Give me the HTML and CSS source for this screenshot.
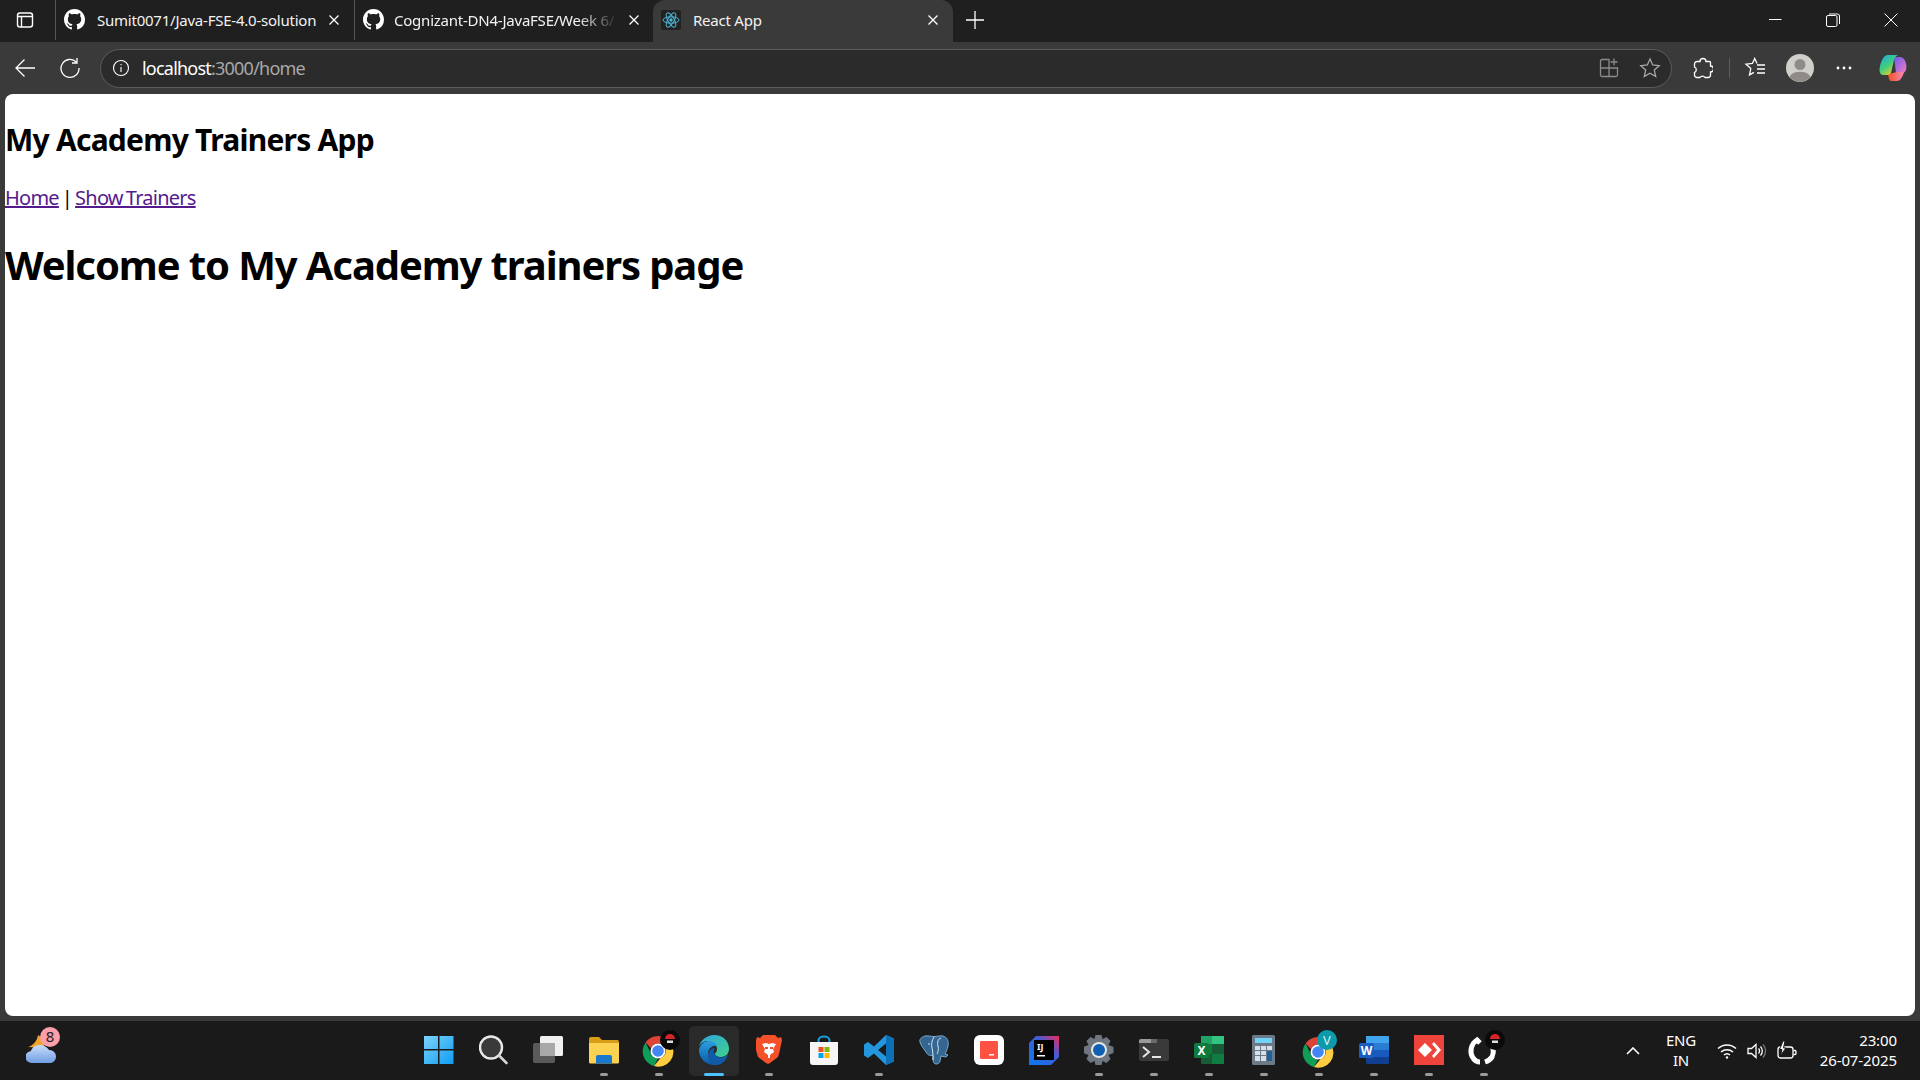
FILE: index.html
```html
<!DOCTYPE html>
<html lang="en">
<head>
  <meta charset="UTF-8">
  <title>React App</title>
  <link rel="stylesheet" href="styles.css">
</head>
<body>
  <svg class="defs" width="0" height="0">
    <symbol id="octocat" viewBox="0 0 16 16">
      <path fill="#fff" d="M8 0C3.58 0 0 3.58 0 8c0 3.54 2.29 6.53 5.47 7.59.4.07.55-.17.55-.38 0-.19-.01-.82-.01-1.49-2.01.37-2.53-.49-2.69-.94-.09-.23-.48-.94-.82-1.13-.28-.15-.68-.52-.01-.53.63-.01 1.08.58 1.23.82.72 1.21 1.87.87 2.33.66.07-.52.28-.87.51-1.07-1.78-.2-3.64-.89-3.64-3.95 0-.87.31-1.59.82-2.15-.08-.2-.36-1.02.08-2.12 0 0 .67-.21 2.2.82.64-.18 1.32-.27 2-.27.68 0 1.36.09 2 .27 1.53-1.04 2.2-.82 2.2-.82.44 1.1.16 1.92.08 2.12.51.56.82 1.27.82 2.15 0 3.07-1.87 3.75-3.65 3.95.29.25.54.73.54 1.48 0 1.07-.01 1.93-.01 2.2 0 .21.15.46.55.38A8.013 8.013 0 0016 8c0-4.42-3.58-8-8-8z"/>
    </symbol>
    <symbol id="close" viewBox="0 0 12 12">
      <path d="M1.5 1.5l9 9M10.5 1.5l-9 9" stroke="#fff" stroke-width="1.3" fill="none"/>
    </symbol>
    <symbol id="chrome" viewBox="0 0 32 32">
      <path fill="#db4437" d="M16 1a15 15 0 0 1 13 7.5H16a7.5 7.5 0 0 0-7 4.8L3.6 7.6A15 15 0 0 1 16 1z"/>
      <path fill="#0f9d58" d="M3.600 7.600L9.500 19.800a7.500 7.500 0 0 0 6.500 3.700L12 31A15 15 0 0 1 3.600 7.600z"/>
      <path fill="#ffcd40" d="M29 8.500a15 15 0 0 1-17 22.500l6.500-8a7.500 7.500 0 0 0 4-11.500z"/>
      <circle cx="16" cy="16" r="7.500" fill="#fff"/>
      <circle cx="16" cy="16" r="5.800" fill="#4285f4"/>
    </symbol>
    <symbol id="pokeball" viewBox="0 0 20 20">
      <circle cx="10" cy="10" r="10" fill="#0a0a0a"/>
      <path fill="#d8232a" d="M5 9a5 5 0 0 1 10 0z"/>
      <path fill="#ddd" d="M7 10.500h6v2.500H7z"/>
    </symbol>
  </svg>

  <div class="tabstrip">
    <button class="tab-side">
      <svg width="20" height="20" viewBox="0 0 20 20" fill="none" stroke="#fff" stroke-width="1.4"><rect x="2.500" y="3" width="15" height="14" rx="2.500"/><path d="M2.500 6.500h15M6.500 6.500V17"/></svg>
    </button>
    <div class="tab">
      <svg class="favicon" width="21" height="21"><use href="#octocat"/></svg>
      <span class="tab-title">Sumit0071/Java-FSE-4.0-solution</span>
      <svg class="tab-close" width="12" height="12"><use href="#close"/></svg>
    </div>
    <div class="tab tab-second">
      <svg class="favicon" width="21" height="21"><use href="#octocat"/></svg>
      <span class="tab-title tab-fade">Cognizant-DN4-JavaFSE/Week 6/</span>
      <svg class="tab-close" width="12" height="12"><use href="#close"/></svg>
    </div>
    <div class="tab tab-active">
      <svg class="favicon" width="20" height="20" viewBox="0 0 20 20" fill="none" stroke="#4fb8d8" stroke-width="1">
        <rect width="20" height="20" rx="2" fill="#222" stroke="none"/>
        <ellipse cx="10" cy="10" rx="8" ry="3.200"/>
        <ellipse cx="10" cy="10" rx="8" ry="3.200" transform="rotate(60 10 10)"/>
        <ellipse cx="10" cy="10" rx="8" ry="3.200" transform="rotate(120 10 10)"/>
        <circle cx="10" cy="10" r="1.700" fill="#4fb8d8" stroke="none"/>
      </svg>
      <span class="tab-title">React App</span>
      <svg class="tab-close" width="12" height="12"><use href="#close"/></svg>
    </div>
    <button class="new-tab">
      <svg width="18" height="18" viewBox="0 0 18 18" stroke="#fff" stroke-width="1.300"><path d="M9 0v18M0 9h18"/></svg>
    </button>
    <div class="window-btns">
      <svg width="14" height="14" viewBox="0 0 14 14" stroke="#fff" stroke-width="1"><path d="M1 6.500h12.500"/></svg>
      <svg width="14" height="14" viewBox="0 0 14 14" fill="none" stroke="#fff" stroke-width="1"><rect x=".5" y="2.500" width="10.500" height="11" rx="1.500"/><path d="M3 1h8.500a2 2 0 0 1 2 2v8"/></svg>
      <svg width="14" height="14" viewBox="0 0 14 14" stroke="#fff" stroke-width="1"><path d="M.5.5l13 13M13.500.5l-13 13"/></svg>
    </div>
  </div>

  <div class="toolbar">
    <button class="tool-btn">
      <svg width="22" height="22" viewBox="0 0 22 22" fill="none" stroke="#fff" stroke-width="1.300"><path d="M21 11H2M10.500 2.500L2 11l8.500 8.500"/></svg>
    </button>
    <button class="tool-btn">
      <svg width="22" height="22" viewBox="0 0 22 22" fill="none" stroke="#fff" stroke-width="1.300"><path d="M17.500 5.200A9 9 0 1 0 20 11"/><path d="M18 1v5h-5"/></svg>
    </button>
    <div class="address">
      <svg class="addr-info" width="18" height="18" viewBox="0 0 18 18" fill="none" stroke="#fff" stroke-width="1.100"><circle cx="9" cy="9" r="7.500"/><path d="M9 8v5M9 5v1.300"/></svg>
      <span class="url">localhost<span class="url-rest">:3000/home</span></span>
      <svg class="addr-icon" width="20" height="20" viewBox="0 0 20 20" fill="none" stroke="#8c8c8c" stroke-width="1.300"><path d="M10 10V1.500H3a1.500 1.500 0 0 0-1.500 1.500v14A1.500 1.500 0 0 0 3 18.500h14a1.500 1.500 0 0 0 1.500-1.500v-7zM1.500 10H10v8.500"/><path d="M15 .5v7M11.500 4h7"/></svg>
      <svg class="addr-icon" width="22" height="22" viewBox="0 0 22 22" fill="none" stroke="#a8a8a8" stroke-width="1.300"><path d="M11 2l2.700 6 6.500.7-4.900 4.400 1.400 6.400-5.700-3.300-5.700 3.300 1.400-6.400L1.800 8.700 8.300 8z"/></svg>
    </div>
    <div class="tool-right">
      <svg class="ext" width="20" height="22" viewBox="0 0 20 22" fill="none" stroke="#fff" stroke-width="1.300"><path d="M7 4.500a3 3 0 0 1 6 0h3.500a1 1 0 0 1 1 1V9a3 3 0 0 1 0 6v3a2.500 2.500 0 0 1-2.500 2.500h-3a3 3 0 0 0-5 0H4A2.500 2.500 0 0 1 1.500 18v-2.500a3 3 0 0 0 0-5.500V7A2.500 2.500 0 0 1 4 4.500z"/></svg>
      <span class="tool-sep"></span>
      <svg class="favs" width="22" height="22" viewBox="0 0 22 22" fill="none" stroke="#fff" stroke-width="1.300"><path d="M13 6.500l-2.300-5-2.300 5-6.400.7 4.800 4.400-1.300 6.300 4.400-2.500M13 8h8M13 12h8M13 16h8"/></svg>
      <svg class="avatar" width="28" height="28" viewBox="0 0 28 28"><circle cx="14" cy="14" r="14" fill="#d1cfca"/><circle cx="14" cy="10.500" r="5.500" fill="#8f8c87"/><path fill="#8f8c87" d="M3.500 23a11 7.500 0 0 1 21 0A14 14 0 0 1 3.500 23z"/></svg>
      <svg class="more" width="16" height="4" viewBox="0 0 16 4" fill="#fff"><circle cx="2" cy="2" r="1.400"/><circle cx="8" cy="2" r="1.400"/><circle cx="14" cy="2" r="1.400"/></svg>
      <svg class="copilot" width="28" height="26" viewBox="0 0 28 26">
        <defs>
          <linearGradient id="cpA" x1="0" y1="0" x2=".7" y2="1"><stop offset="0" stop-color="#1fa6f0"/><stop offset=".55" stop-color="#3fcf7a"/><stop offset="1" stop-color="#f6c92c"/></linearGradient>
          <linearGradient id="cpB" x1="0" y1="0" x2="1" y2="1"><stop offset="0" stop-color="#6a5cf0"/><stop offset="1" stop-color="#f57ac0"/></linearGradient>
          <linearGradient id="cpC" x1="0" y1="0" x2="1" y2="0"><stop offset="0" stop-color="#f2501e"/><stop offset="1" stop-color="#f78ab8"/></linearGradient>
        </defs>
        <path fill="url(#cpB)" d="M15 2h6c3 0 5.500 3 6.300 8 .5 4-.8 8-3.800 8H17z"/>
        <path fill="url(#cpC)" d="M9 19l9-2h7c-1 4-3.500 9-7 9h-6c-1.500 0-2.500-3-3-7z"/>
        <path fill="url(#cpA)" d="M9 0h10c-2.500 1-3.500 3-4 5l-2.500 11c-.5 2.500-2 4-4 4H4C1.500 20 0 17 .7 13 1.500 8 4 0 9 0z"/>
      </svg>
    </div>
  </div>

  <main class="viewport">
    <h2>My Academy Trainers App</h2>
    <nav class="links"><a href="#home">Home</a> | <a href="#trainers">Show Trainers</a></nav>
    <h1>Welcome to My Academy trainers page</h1>
  </main>

  <div class="taskbar">
    <div class="tb-left">
      <svg width="36" height="38" viewBox="0 0 36 38">
        <defs><linearGradient id="cloud" x1="0" y1="0" x2="0" y2="1"><stop offset="0" stop-color="#c9defa"/><stop offset="1" stop-color="#6f9fe4"/></linearGradient></defs>
        <path fill="#f2a32c" d="M2 21C6 20 11 16 12 9c4 2 7 7 6 13z"/>
        <path fill="url(#cloud)" d="M6 37a6 6 0 0 1-1-12c1-4 5-6 9-6 4 0 7 2 9 5a6.500 6.500 0 0 1 7 6.500c0 4-3 6.500-6 6.500z"/>
        <circle cx="24" cy="11" r="10" fill="#fb9fab"/>
        <text x="24" y="16" class="badge-num" text-anchor="middle">8</text>
      </svg>
    </div>
    <div class="tb-apps">
      <div class="app">
        <svg width="30" height="30" viewBox="0 0 30 30">
          <defs><linearGradient id="win" x1="0" y1="0" x2="1" y2="1"><stop offset="0" stop-color="#7cd4fb"/><stop offset="1" stop-color="#0f9bf2"/></linearGradient></defs>
          <path fill="url(#win)" d="M0 1h14v13H0zM15.500 1h14v13h-14zM0 15.500h14V29H0zM15.500 15.500h14V29h-14z"/>
        </svg>
      </div>
      <div class="app">
        <svg width="30" height="30" viewBox="0 0 30 30" fill="none"><circle cx="12" cy="12.500" r="11" fill="#3a3a3a" stroke="#e8e8e8" stroke-width="2.400"/><path d="M20.500 21l7 7" stroke="#d4d4d4" stroke-width="2.600" stroke-linecap="round"/></svg>
      </div>
      <div class="app">
        <svg width="32" height="30" viewBox="0 0 32 30"><rect y="8" width="22" height="20" rx="2" fill="#5a5a5a"/><rect x="7" y="1" width="23" height="20" rx="1.500" fill="#f0f0f0"/><rect x="7" y="8" width="15" height="13" fill="#a8a8a8"/></svg>
      </div>
      <div class="app has-pip">
        <svg width="30" height="28" viewBox="0 0 30 28"><path fill="#d99e17" d="M0 3a2 2 0 0 1 2-2h8l3 3h15a2 2 0 0 1 2 2v4H0z"/><path fill="#fcd252" d="M0 7h30v19a1.500 1.500 0 0 1-1.500 1.500h-27A1.500 1.500 0 0 1 0 26z"/><path fill="#1778cc" d="M7 21a2 2 0 0 1 2-2h12a2 2 0 0 1 2 2v6.500H7z"/></svg>
      </div>
      <div class="app has-pip">
        <svg class="app-over" width="42" height="40" viewBox="0 0 42 40"><use href="#chrome" x="4" y="5" width="32" height="32"/><use href="#pokeball" x="22" y="0" width="20" height="20"/></svg>
      </div>
      <div class="app app-active">
        <svg width="30" height="30" viewBox="0 0 30 30">
          <defs>
            <linearGradient id="edgeA" x1="0" y1="0" x2="1" y2="1"><stop offset="0" stop-color="#2ea6e0"/><stop offset="1" stop-color="#3fd08c"/></linearGradient>
            <linearGradient id="edgeB" x1="0" y1="0" x2="0" y2="1"><stop offset="0" stop-color="#2b9fe0"/><stop offset="1" stop-color="#0c59a4"/></linearGradient>
          </defs>
          <path fill="url(#edgeA)" d="M15 0c9 0 15 6 15 14 0 5-4 8-8 8-3 0-6-1-6-3 0-1 2-2 2-5 0-4-4-8-9-8-4 0-7 2-9 5C2 5 8 0 15 0z"/>
          <path fill="url(#edgeB)" d="M0 15c1-6 6-9 10-9 4 0 7 2 8 5-4-1-9 2-9 8 0 4 3 9 9 11-9 1-18-5-18-15z"/>
          <path fill="#0f5ba8" d="M16 19c1 3 5 4 8 3 2-.5 4-1.500 5-3-1 6-6 11-12 11-4 0-8-4-8-9 0-5 3-8 7-8-1 1-2 3-1 5 0 0 1 1 1 1z"/>
        </svg>
        <span class="active-pip"></span>
      </div>
      <div class="app has-pip">
        <svg width="26" height="30" viewBox="0 0 26 30"><path fill="#f4502a" d="M7 0h12l3 3 3-1 1 3-1.500 7-1 5-1.500 5-8 6-2 1-2-1-8-6-1.500-5-1-5L0 5l1-3 3 1z"/><path fill="#fff" d="M6 9l4-1 3 1 3-1 4 1-3 5 1 3-4 3v3h-2v-3l-4-3 1-3z"/><path fill="#f4502a" d="M9 12h3v2H9zM14 12h3v2h-3z"/></svg>
      </div>
      <div class="app">
        <svg width="30" height="30" viewBox="0 0 30 30"><path fill="none" stroke="#19a0d8" stroke-width="2" d="M9.500 8V5a5.500 3.500 0 0 1 11 0v3"/><path fill="#f6f6f6" d="M1 7h28v20a3 3 0 0 1-3 3H4a3 3 0 0 1-3-3z"/><path fill="#f25022" d="M9.500 12h5v5h-5z"/><path fill="#7fba00" d="M15.500 12h5v5h-5z"/><path fill="#00a4ef" d="M9.500 18h5v5h-5z"/><path fill="#ffb900" d="M15.500 18h5v5h-5z"/></svg>
      </div>
      <div class="app has-pip">
        <svg width="30" height="30" viewBox="0 0 30 30"><path fill="#2396dd" d="M22 0l8 3.500v23L22 30 10 18.500 4 23l-4-2.500v-11L4 7l6 4.500zM22 8.500L14 15l8 6.500z"/><path fill="#0d6fb8" d="M22 0l8 3.500v23L22 30z"/></svg>
      </div>
      <div class="app">
        <svg width="30" height="30" viewBox="0 0 30 30"><path fill="#336791" stroke="#7ea6c8" stroke-width="1" d="M6 1c3-.5 6 .5 9 .5s6-1 9-.5c4 1 6 5 5 10-1 4-2 6-3 8l3 1-2 2-5-1-1 5c0 2-2 3-4 3s-3-2-3-5v-4c-2 1-5 1-7-3-2-3-5-6-6-10C0 5 2 2 6 1z"/><path fill="none" stroke="#d3e3f0" stroke-width="1" d="M15 2c-2 3-3 7-2 11s1 8 1 12M22 3c-3 1-4 4-3 8 1 3 0 6-1 8M9 9h2"/></svg>
      </div>
      <div class="app">
        <svg width="30" height="30" viewBox="0 0 30 30"><rect width="30" height="30" rx="6" fill="#fff"/><rect x="6" y="6" width="18" height="18" rx="1" fill="#ff5243"/><path fill="#fff" d="M15 19h5v1.500h-5z"/></svg>
      </div>
      <div class="app">
        <svg width="30" height="30" viewBox="0 0 30 30">
          <defs><linearGradient id="ij" x1="0" y1="1" x2="1" y2="0"><stop offset="0" stop-color="#0b78f0"/><stop offset=".6" stop-color="#3d5ed8"/><stop offset="1" stop-color="#f2295c"/></linearGradient></defs>
          <path fill="url(#ij)" d="M7 1h23v21l-8 8H0V8z"/>
          <path fill="#000" d="M5 5h20v20H5z"/>
          <text x="8" y="15" class="ij-text">IJ</text>
          <path fill="#fff" d="M8 20h8v1.500H8z"/>
        </svg>
      </div>
      <div class="app has-pip">
        <svg width="30" height="30" viewBox="0 0 30 30"><path fill="#6e7680" d="M12 0h6l1 4 4-2 4 4-2 4 5 2v6l-5 2 2 4-4 4-4-2-1 4h-6l-1-4-4 2-4-4 2-4-5-2v-6l5-2-2-4 4-4 4 2z" transform="translate(-.5 0)"/><circle cx="15" cy="15" r="8" fill="#e6e6e6"/><circle cx="15" cy="15" r="6" fill="#0f5fb4"/></svg>
      </div>
      <div class="app has-pip">
        <svg width="30" height="24" viewBox="0 0 30 24"><rect width="30" height="22" y="1" rx="2" fill="#3a3a3a"/><path fill="#9b9b9b" d="M0 3a2 2 0 0 1 2-2h10v4H0z"/><path fill="#6a6a6a" d="M12 1h6v4h-6z"/><path fill="none" stroke="#e6e6e6" stroke-width="2" d="M4 9l6 5-6 5"/><path fill="#e6e6e6" d="M13 18h9v2h-9z"/></svg>
      </div>
      <div class="app has-pip">
        <svg width="30" height="28" viewBox="0 0 30 28"><path fill="#21a366" d="M7 0h22a1 1 0 0 1 1 1v7H7z"/><path fill="#33c481" d="M18 0h11a1 1 0 0 1 1 1v7H18z"/><path fill="#107c41" d="M7 8h11v10H7zM18 18h12v9a1 1 0 0 1-1 1H18z"/><path fill="#185c37" d="M18 8h12v10H18zM7 18h11v10H8a1 1 0 0 1-1-1z"/><rect y="7" width="15" height="15" rx="1.500" fill="#0e7a3c"/><text x="7.500" y="19" class="office-text" text-anchor="middle">X</text></svg>
      </div>
      <div class="app has-pip">
        <svg width="24" height="30" viewBox="0 0 24 30"><rect width="23" height="30" rx="1.500" fill="#6c7a88"/><rect x="3" y="3" width="17" height="5" fill="#6fd4f7"/><path fill="#d6dfe8" d="M3 11h5v4H3zM9 11h5v4H9zM15 11h5v4h-5zM3 16h5v4H3zM9 16h5v4H9zM3 21h5v5H3zM9 21h5v5H9z"/><path fill="#1f5f9e" d="M15 16h5v10h-5z"/></svg>
      </div>
      <div class="app has-pip">
        <svg class="app-over" width="42" height="40" viewBox="0 0 42 40"><use href="#chrome" x="4" y="6" width="32" height="32"/><circle cx="29" cy="10" r="10" fill="#0d9aaa"/><text x="29" y="15" class="v-text" text-anchor="middle">V</text></svg>
      </div>
      <div class="app has-pip">
        <svg width="30" height="28" viewBox="0 0 30 28"><path fill="#41a5ee" d="M7 0h22a1 1 0 0 1 1 1v6H7z"/><path fill="#2b7cd3" d="M7 7h23v7H7z"/><path fill="#185abd" d="M7 14h23v7H7z"/><path fill="#103f91" d="M7 21h23v6a1 1 0 0 1-1 1H8a1 1 0 0 1-1-1z"/><rect y="7" width="15" height="15" rx="1.500" fill="#1a5cc0"/><text x="7.500" y="19" class="office-text" text-anchor="middle">W</text></svg>
      </div>
      <div class="app has-pip">
        <svg width="30" height="30" viewBox="0 0 30 30"><rect width="30" height="30" fill="#ef443b"/><path fill="#fff" d="M11 8l7 7-7 7-7-7z"/><path fill="#fff" d="M18 9l2-2 7 8-7 8-2-2 5-6z"/></svg>
      </div>
      <div class="app has-pip">
        <svg class="app-over" width="42" height="40" viewBox="0 0 42 40" fill="none"><path d="M10 28a13 13 0 0 1 4-18l3 3M27 13a13 13 0 0 1 2 14c-2 3-4 4-7 5M10 28c2 3 4 4 7 4" stroke="#fff" stroke-width="5"/><use href="#pokeball" x="22" y="0" width="20" height="20"/></svg>
      </div>
    </div>
    <div class="tray">
      <svg class="chevron" width="14" height="8" viewBox="0 0 14 8" fill="none" stroke="#fff" stroke-width="1.600"><path d="M1 7l6-6 6 6"/></svg>
      <div class="lang">ENG<br>IN</div>
      <svg class="tray-icon" width="20" height="18" viewBox="0 0 20 18" fill="none" stroke="#fff" stroke-width="1.500"><path d="M1 6.500a13 13 0 0 1 18 0M4 10a9 9 0 0 1 12 0M7 13a4.500 4.500 0 0 1 6 0"/><circle cx="10" cy="15.500" r="1.200" fill="#fff" stroke="none"/></svg>
      <svg class="tray-icon" width="20" height="18" viewBox="0 0 20 18" fill="none" stroke="#fff" stroke-width="1.300"><path d="M1 6.500h3.500L9 2.500v13l-4.500-4H1z"/><path d="M11.500 6.500a3.500 3.500 0 0 1 0 5M13.500 4.500a6.500 6.500 0 0 1 0 9"/><path d="M16 2.500a9.500 9.500 0 0 1 0 13" stroke="#777"/></svg>
      <svg class="tray-icon" width="20" height="20" viewBox="0 0 20 20" fill="none" stroke="#fff" stroke-width="1.300"><rect x="1" y="6" width="15" height="11" rx="2.500"/><path d="M16.500 9.500h1.500a1 1 0 0 1 1 1v2a1 1 0 0 1-1 1h-1.500"/><path fill="#fff" stroke="#1a1a1a" stroke-width="1" d="M6 0L2.500 8.500H5L3.500 14.500 9 7H6.500L8 0z"/></svg>
      <div class="clock">23:00<br>26-07-2025</div>
    </div>
  </div>
</body>
</html>
```

FILE: styles.css
```css
* {
  box-sizing: border-box;
}
html, body {
  height: 100%;
}
body {
  margin: 0;
  display: flex;
  flex-direction: column;
  height: 1080px;
  overflow: hidden;
  background: #3a3a3a;
  font-family: "Noto Sans", sans-serif;
  color: #fff;
}
button {
  background: none;
  border: none;
  padding: 0;
  display: flex;
  align-items: center;
  justify-content: center;
}
.defs {
  position: absolute;
}

/* Tabs */
.tabstrip {
  height: 42px;
  flex: none;
  display: flex;
  align-items: flex-start;
  background: #1f1f1f;
}
.tab-side {
  width: 55px;
  height: 40px;
  flex: none;
  padding-right: 6px;
}
.tab {
  width: 299px;
  height: 40px;
  flex: none;
  display: flex;
  align-items: center;
  padding: 0 8px 1px 8px;
  border-left: 1px solid #555;
}
.tab-second {
  width: 300px;
}
.tab-active {
  width: 300px;
  height: 42px;
  margin-left: -1px;
  padding: 0 8px 3px 8px;
  border: none;
  border-radius: 12px 12px 0 0;
  background: #3a3a3a;
}
.favicon {
  flex: none;
}
.tab-title {
  flex: 1;
  min-width: 0;
  margin-left: 12px;
  font-size: 15px;
  letter-spacing: -0.23px;
  white-space: nowrap;
  overflow: hidden;
  color: #f2f2f2;
}
.tab-second .tab-title {
  margin-left: 10px;
}
.tab-fade {
  -webkit-mask-image: linear-gradient(to right, #000 82%, transparent 100%);
  mask-image: linear-gradient(to right, #000 82%, transparent 100%);
}
.tab-close {
  flex: none;
  margin: 0 6px 0 10px;
}
.new-tab {
  width: 44px;
  height: 40px;
  flex: none;
}
.window-btns {
  margin-left: auto;
  display: flex;
  align-items: center;
  height: 40px;
  gap: 44px;
  padding-right: 22px;
}

/* Toolbar */
.toolbar {
  height: 52px;
  flex: none;
  display: flex;
  align-items: center;
  padding: 0 8px 0 2px;
  background: #3a3a3a;
}
.tool-btn {
  width: 45px;
  height: 40px;
  flex: none;
}
.address {
  width: 1572px;
  height: 39px;
  margin-left: 8px;
  flex: none;
  display: flex;
  align-items: center;
  padding: 0 10px 0 11px;
  background: #2b2b2b;
  border: 1px solid #5c5c5c;
  border-radius: 20px;
}
.url {
  flex: 1;
  margin-left: 12px;
  padding-bottom: 1px;
  font-size: 18px;
  letter-spacing: -0.78px;
  color: #fff;
}
.url-rest {
  color: #a8a8a8;
}
.addr-icon {
  margin-left: 20px;
}
.tool-right {
  flex: 1;
  display: flex;
  align-items: center;
  padding-left: 21px;
}
.tool-sep {
  width: 1px;
  height: 20px;
  margin: 0 14px 0 16px;
  background: #5c5c5c;
}
.avatar {
  margin-left: 20px;
}
.more {
  margin-left: 22px;
}
.copilot {
  margin-left: 27px;
}

/* Page */
.viewport {
  height: 922px;
  flex: none;
  margin: 0 5px;
  padding: 0;
  background: #fff;
  border-radius: 8px;
  color: #000;
  font-size: 20px;
  font-family: "Noto Sans", sans-serif;
  overflow: hidden;
}
.viewport h2 {
  font-size: 30px;
  line-height: 40px;
  margin: 26px 0 24px;
  letter-spacing: -0.76px;
}
.links {
  line-height: 27px;
  letter-spacing: -0.75px;
  word-spacing: -1.5px;
}
.links a {
  color: #551a8b;
}
.viewport h1 {
  font-size: 40px;
  line-height: 53px;
  margin: 27px 0;
  letter-spacing: -1.11px;
}

/* Taskbar */
.taskbar {
  flex: 1;
  margin-top: 5px;
  display: flex;
  align-items: center;
  background: #1a1a1a;
}
.tb-left {
  width: 411px;
  flex: none;
  padding: 0 0 6px 26px;
}
.tb-apps {
  display: flex;
  align-items: center;
}
.app {
  position: relative;
  width: 55px;
  height: 50px;
  flex: none;
  display: flex;
  align-items: center;
  justify-content: center;
  padding-bottom: 2px;
}
.has-pip::after {
  content: "";
  position: absolute;
  left: 24px;
  bottom: 0;
  width: 8px;
  height: 3px;
  border-radius: 2px;
  background: #9b9b9b;
}
.app-active {
  width: 50px;
  margin: 0 2.500px;
  background: #2a2a2a;
  border-radius: 5px;
}
.active-pip {
  position: absolute;
  left: 15px;
  bottom: 0;
  width: 20px;
  height: 3px;
  border-radius: 2px;
  background: #4cc2ff;
}
.app-over {
  flex: none;
}
.badge-num {
  font-size: 15px;
  fill: #222;
  font-family: "Noto Sans", sans-serif;
}
.ij-text {
  font-size: 9px;
  font-weight: bold;
  fill: #fff;
  font-family: "Noto Sans", sans-serif;
}
.office-text {
  font-size: 12px;
  font-weight: bold;
  fill: #fff;
  font-family: "Noto Sans", sans-serif;
}
.v-text {
  font-size: 13px;
  fill: #cfeff2;
  font-family: "Noto Sans", sans-serif;
}
.tray {
  flex: 1;
  display: flex;
  align-items: center;
  padding-left: 115px;
  font-size: 15px;
  color: #fff;
}
.lang {
  width: 44px;
  margin-left: 19px;
  padding-bottom: 2px;
  text-align: center;
  line-height: 20px;
  letter-spacing: -0.2px;
}
.tray-icon {
  margin-left: 10px;
  flex: none;
}
.lang + .tray-icon {
  margin-left: 14px;
}
.clock {
  margin-left: auto;
  padding-right: 23px;
  padding-bottom: 2px;
  text-align: right;
  line-height: 20px;
  letter-spacing: -0.1px;
}
```
